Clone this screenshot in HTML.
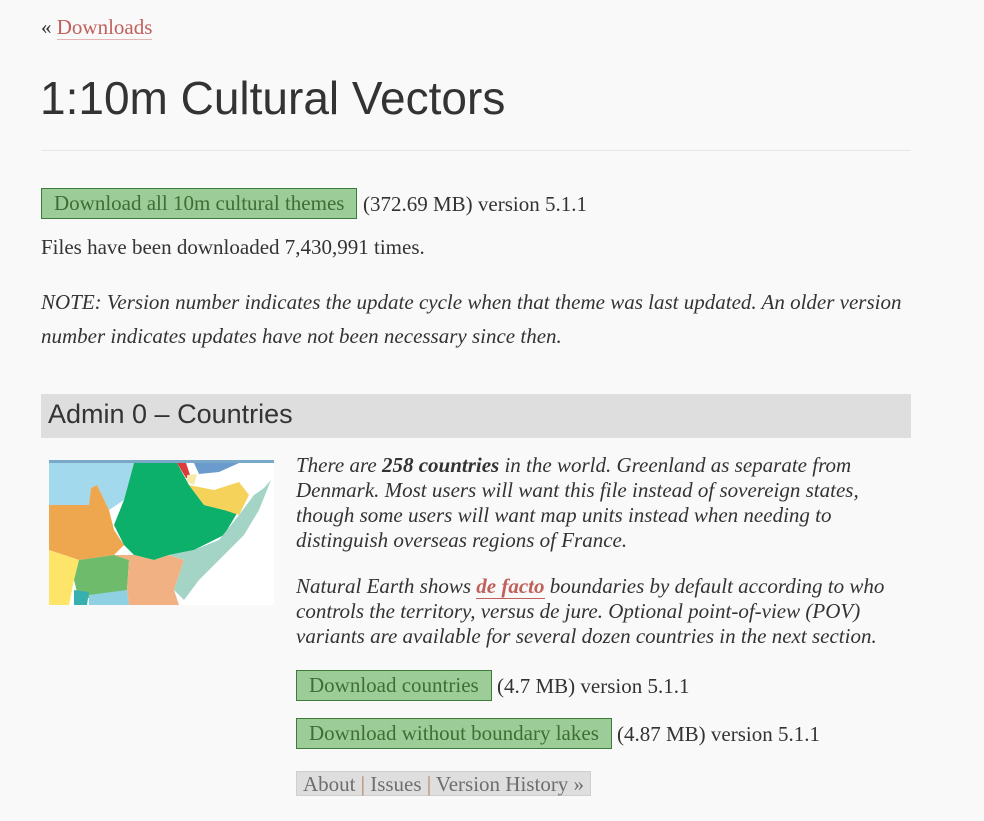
<!DOCTYPE html>
<html><head><meta charset="utf-8"><style>
body{margin:0;background:#f9f9f9;width:984px;height:821px;overflow:hidden;position:relative;font-family:"Liberation Serif",serif;font-size:21px;color:#333;}
.a{position:absolute;white-space:nowrap;}
.btn{position:absolute;background:#9ccd98;border:1px solid #3d7b3a;color:#3f6d33;height:29px;line-height:29px;padding:0 12px;white-space:nowrap;}
</style></head><body>
<div class="a" style="left:41px;top:15px;">« <span style="color:#c0605c;border-bottom:1px solid #e5b5b3;">Downloads</span></div>
<div class="a" style="left:40px;top:71px;font-family:'Liberation Sans',sans-serif;font-size:46px;color:#333;">1:10m Cultural Vectors</div>
<div class="a" style="left:41px;top:150px;width:870px;height:1px;background:#e6e6e6;"></div>
<div class="btn" style="left:41px;top:188px;">Download all 10m cultural themes</div>
<div class="a" style="left:363px;top:192px;">(372.69 MB) version 5.1.1</div>
<div class="a" style="left:41px;top:235px;">Files have been downloaded 7,430,991 times.</div>
<div class="a" style="left:41px;top:285px;font-style:italic;line-height:34px;white-space:normal;width:880px;">NOTE: Version number indicates the update cycle when that theme was last updated. An older version number indicates updates have not been necessary since then.</div>
<div class="a" style="left:41px;top:394px;width:870px;height:44px;background:#dedede;"></div>
<div class="a" style="left:48px;top:399px;font-family:'Liberation Sans',sans-serif;font-size:27px;color:#333;">Admin 0 – Countries</div>
<svg class="a" style="left:49px;top:460px;" width="225" height="145" viewBox="0 0 225 145">
<rect width="225" height="145" fill="#fff"/>
<rect width="225" height="3" fill="#7aa8c8"/>
<path d="M0 3H85L75 40 60 50 48 25 42 28 40 45 0 45Z" fill="#a3d9ec"/>
<path d="M0 45L40 45 42 28 48 25 60 50 65 70 75 85 65 95 30 100 0 90Z" fill="#eea64f"/>
<path d="M85 3H128L140 25 155 45 175 50 190 50 175 75 145 90 120 95 105 100 85 95 75 85 65 65 75 40Z" fill="#0db06a"/>
<path d="M0 90L30 100 25 120 20 145H0Z" fill="#fde56a"/>
<path d="M30 100L65 95 80 100 78 130 55 135 30 140 25 120Z" fill="#6fbb6c"/>
<path d="M65 95L85 95 105 100 120 95 135 100 125 130 130 145H80L78 130 80 100Z" fill="#f2b182"/>
<path d="M120 95L145 90 170 80 190 55 205 35 215 28 222 20 210 50 195 75 170 100 150 120 135 140 125 130 135 100Z" fill="#a3d4c6"/>
<path d="M140 25L165 30 190 22 200 35 190 55 175 50 155 45Z" fill="#f5d25a"/>
<path d="M128 3H137L142 18 137 18Z" fill="#dc3b3b"/>
<path d="M138 15L148 14 145 25 138 22Z" fill="#f7eaa8"/>
<path d="M145 3H190L170 12 150 14Z" fill="#6b9bcc"/>
<path d="M25 130L40 132 38 145H25Z" fill="#39b0b0"/>
<path d="M40 135L78 130 80 145H40Z" fill="#8fd1e3"/>
</svg>
<div class="a" style="left:296px;top:453px;width:600px;white-space:normal;line-height:25px;font-style:italic;">There are <b>258 countries</b> in the world. Greenland as separate from Denmark. Most users will want this file instead of sovereign states, though some users will want map units instead when needing to distinguish overseas regions of France.</div>
<div class="a" style="left:296px;top:574px;width:600px;white-space:normal;line-height:25px;font-style:italic;">Natural Earth shows <b style="color:#c0605c;border-bottom:1px solid #c0605c;">de facto</b> boundaries by default according to who controls the territory, versus de jure. Optional point-of-view (POV) variants are available for several dozen countries in the next section.</div>
<div class="btn" style="left:296px;top:670px;">Download countries</div>
<div class="a" style="left:497px;top:674px;">(4.7 MB) version 5.1.1</div>
<div class="btn" style="left:296px;top:718px;">Download without boundary lakes</div>
<div class="a" style="left:617px;top:722px;">(4.87 MB) version 5.1.1</div>
<div class="a" style="left:296px;top:771px;height:25px;background:#dedede;border:1px solid #cfcfcf;color:#6e6e6e;line-height:25px;padding:0 6px;box-sizing:border-box;width:295px;">About <span style="color:#b08060">|</span> Issues <span style="color:#b08060">|</span> Version History »</div>
</body></html>
